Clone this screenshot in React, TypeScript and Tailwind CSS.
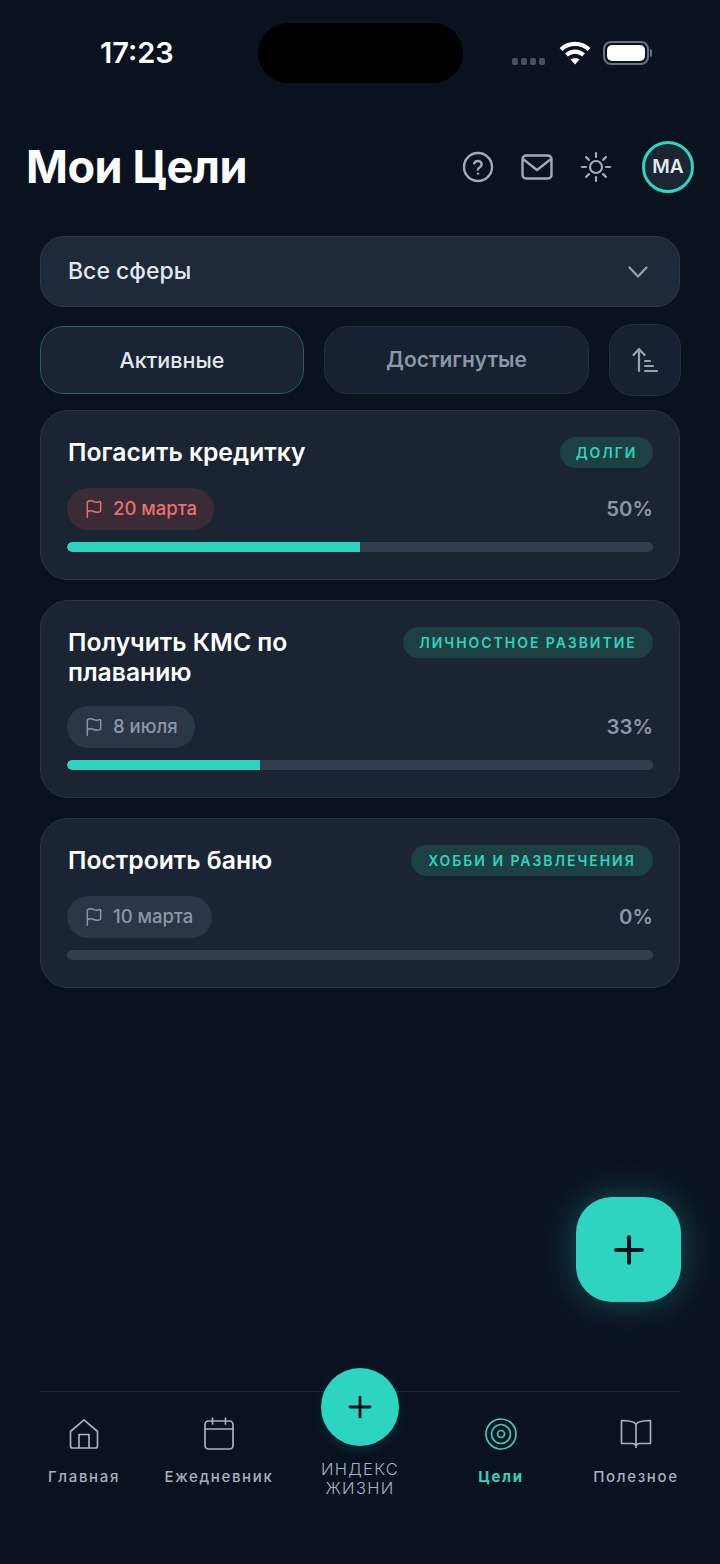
import { Flag, Plus } from "lucide-react";

const goals = [
  { title: "Погасить кредитку", tag: "ДОЛГИ", date: "20 марта", pct: 50, overdue: true, tagW: "w-[93px]", dateW: "w-[147px]", h: "h-[170px]", gap: "mt-[20px]" },
  { title: "Получить КМС по плаванию", tag: "ЛИЧНОСТНОЕ РАЗВИТИЕ", date: "8 июля", pct: 33, overdue: false, tagW: "w-[250px]", dateW: "w-[128px]", h: "h-[198px]", gap: "mt-[19px]" },
  { title: "Построить баню", tag: "ХОББИ И РАЗВЛЕЧЕНИЯ", date: "10 марта", pct: 0, overdue: false, tagW: "w-[242px]", dateW: "w-[145px]", h: "h-[170px]", gap: "mt-[20px]" },
];

function GoalCard({ goal }: { goal: (typeof goals)[number] }) {
  return (
    <div className={`${goal.h} rounded-[28px] border border-[#273742] bg-[#1a2432] px-[26px] pt-[26px]`}>
      <div className="flex items-start justify-between">
        <h2 className="w-[290px] pl-[1px] text-[24.7px] leading-[30px] font-semibold text-white">{goal.title}</h2>
        <span className={`${goal.tagW} flex h-[31px] shrink-0 items-center justify-center rounded-full bg-[#1d4045] text-[14px] font-semibold tracking-[0.14em] text-[#2dd4bf]`}>
          {goal.tag}
        </span>
      </div>
      <div className={`${goal.gap} flex items-center justify-between`}>
        <span
          className={`${goal.dateW} flex h-[42px] items-center gap-[9px] rounded-full pl-[17px] text-[18.5px] font-medium ${
            goal.overdue ? "bg-[#3a2b36] text-[#e8706f]" : "bg-[#2b3648] text-[#8b96a8]"
          }`}
        >
          <Flag size={20} strokeWidth={1.8} />
          {goal.date}
        </span>
        <span className="text-[20.4px] font-semibold text-[#8b96a8]">{goal.pct}%</span>
      </div>
      <div className="mt-[12px] h-[10px] overflow-hidden rounded-full bg-[#323e4f]">
        <div className="h-full rounded-l-full bg-[#2dd4bf]" style={{ width: `${goal.pct}%` }} />
      </div>
    </div>
  );
}

function NavItem({ label, width, active, children }: { label: string; width: string; active?: boolean; children: React.ReactNode }) {
  return (
    <div className={`${width} flex flex-col items-center ${active ? "text-[#2dd4bf]" : "text-[#a7b0bf]"}`}>
      <div className="flex h-[34px] w-[34px] items-center justify-center">{children}</div>
      <span className={`mt-[16px] text-[15px] leading-[20px] tracking-[0.11em] ${active ? "font-bold" : "font-medium"}`}>{label}</span>
    </div>
  );
}

export default function App() {
  return (
    <div className="relative flex h-[1564px] w-[720px] flex-col overflow-hidden bg-[#0a1220] font-['Inter',sans-serif]">
      {/* Status bar */}
      <div className="flex items-start pt-[23px]">
        <span className="mt-[11px] ml-[100px] w-[158px] text-[29px] leading-[38px] font-semibold text-white">17:23</span>
        <div className="h-[60px] w-[205px] rounded-[30px] bg-black" />
        <div className="mt-[17px] ml-[49px] flex items-center">
          <div className="mt-[16px] flex gap-[3px]">
            <i className="h-[7px] w-[6px] rounded-[2px] bg-[#4a5260]" />
            <i className="h-[7px] w-[6px] rounded-[2px] bg-[#4a5260]" />
            <i className="h-[7px] w-[6px] rounded-[2px] bg-[#4a5260]" />
            <i className="h-[7px] w-[6px] rounded-[2px] bg-[#4a5260]" />
          </div>
          <svg className="ml-[14px]" width="32" height="26" viewBox="0 0 32 26" fill="none" stroke="white" strokeWidth="4.2">
            <path d="M2 9.5C10 2 22 2 30 9.5" />
            <path d="M7.5 15C12.5 10.5 19.5 10.5 24.5 15" />
            <path d="M16 24.5L11.5 19.5C14 17.7 18 17.7 20.5 19.5Z" fill="white" stroke="none" />
          </svg>
          <div className="ml-[12px] flex items-center">
            <div className="flex h-[24px] w-[46px] items-center justify-center rounded-[8px] border-2 border-[#6b7280]">
              <div className="h-[16px] w-[38px] rounded-[5px] bg-white" />
            </div>
            <div className="ml-[1px] h-[8px] w-[2px] rounded-r bg-[#6b7280]" />
          </div>
        </div>
      </div>

      {/* Header */}
      <div className="mt-[48px] flex h-[72px] items-center pr-[26px] pl-[26px]">
        <h1 className="flex-1 text-[45px] font-bold tracking-[-0.01em] text-white">Мои Цели</h1>
        <div className="flex items-center text-[#a0aaba]">
          <svg width="32" height="32" viewBox="0 0 32 32" fill="none" stroke="currentColor" strokeWidth="2.4" strokeLinecap="round">
            <circle cx="16" cy="16" r="14" />
            <path d="M12.2 12.4a3.9 3.9 0 0 1 7.5 1.2c0 2.5-3.7 3-3.7 5" />
            <path d="M16 22.6h.02" />
          </svg>
          <svg className="ml-[27px]" width="32" height="26" viewBox="0 0 32 26" fill="none" stroke="currentColor" strokeWidth="2.4" strokeLinejoin="round">
            <rect x="1.5" y="1.5" width="29" height="23" rx="3.5" />
            <path d="M2 5l14 11L30 5" />
          </svg>
          <svg className="ml-[27px]" width="32" height="32" viewBox="0 0 32 32" fill="none" stroke="currentColor" strokeWidth="2.2" strokeLinecap="round">
            <circle cx="16" cy="16" r="6" />
            <path d="M16 2v4M16 26v4M2 16h4M26 16h4M6.1 6.1l2.8 2.8M23.1 23.1l2.8 2.8M6.1 25.9l2.8-2.8M23.1 8.9l2.8-2.8" />
          </svg>
          <div className="ml-[30px] flex h-[52px] w-[52px] items-center justify-center rounded-full border-[3px] border-[#2dd4bf] bg-[#1b2533] text-[19px] font-semibold text-[#e2e8f0]">
            MA
          </div>
        </div>
      </div>

      <main className="mt-[33px] flex flex-col px-[40px]">
        {/* Sphere select */}
        <div className="flex h-[71px] items-center justify-between rounded-[24px] border border-[#2c3848] bg-[#1e293a] pr-[31px] pl-[27px]">
          <span className="text-[23px] font-medium text-[#e2e8f0]">Все сферы</span>
          <svg width="20" height="12" viewBox="0 0 20 12" fill="none" stroke="#94a3b8" strokeWidth="2.2" strokeLinecap="round" strokeLinejoin="round">
            <path d="M1.5 1.5 10 10.5l8.5-9" />
          </svg>
        </div>

        {/* Tabs */}
        <div className="mt-[17px] flex items-center">
          <button className="h-[68px] w-[264px] shrink-0 rounded-[24px] border border-[#27605f] bg-[#1a2433] text-[21.5px] font-medium text-[#e2e8f0]">Активные</button>
          <button className="ml-[20px] h-[68px] w-[265px] shrink-0 rounded-[24px] border border-[#232e3d] bg-[#172131] text-[21px] font-semibold text-[#8b96a8]">Достигнутые</button>
          <button className="ml-[20px] flex h-[72px] w-[72px] shrink-0 items-center justify-center rounded-[24px] border border-[#232e3d] bg-[#172131] text-[#94a3b8]">
            <svg width="26" height="26" viewBox="0 0 26 26" fill="none" stroke="currentColor" strokeWidth="2.2" strokeLinecap="round" strokeLinejoin="round">
              <path d="M7 24V2M1.5 8L7 2l5.5 6" />
              <path d="M13 14h5M13 19h8M13 24h12" />
            </svg>
          </button>
        </div>

        {/* Goals */}
        <div className="mt-[14px] flex flex-col gap-[20px]">
          {goals.map((goal) => (
            <GoalCard key={goal.title} goal={goal} />
          ))}
        </div>
      </main>

      {/* FAB */}
      <button className="absolute top-[1197px] left-[576px] flex h-[105px] w-[105px] items-center justify-center rounded-[36px] bg-[#2dd4bf] text-[#0a1220] shadow-[0_0_34px_rgba(45,212,191,0.35)]">
        <Plus size={44} strokeWidth={2.2} />
      </button>

      {/* Bottom nav */}
      <nav className="mx-[40px] mt-auto mb-[66px] border-t border-[#182231] pt-[25px]">
        <div className="-mx-[23px] flex items-start">
          <NavItem label="Главная" width="w-[134px]">
            <svg width="30" height="32" viewBox="0 0 30 32" fill="none" stroke="currentColor" strokeWidth="1.7" strokeLinejoin="round">
              <path d="M1.5 13.5 15 1.8l13.5 11.7V28a2 2 0 0 1-2 2h-23a2 2 0 0 1-2-2Z" />
              <path d="M10 30V16.5h10V30" />
            </svg>
          </NavItem>
          <NavItem label="Ежедневник" width="w-[136px]">
            <svg width="30" height="34" viewBox="0 0 30 34" fill="none" stroke="currentColor" strokeWidth="1.7" strokeLinecap="round" strokeLinejoin="round">
              <rect x="1" y="4" width="28" height="28" rx="3.5" />
              <path d="M1 12h28M8.5 1v6M21.5 1v6" />
            </svg>
          </NavItem>
          <div className="relative flex w-[146px] flex-col items-center">
            <button className="absolute -top-[49px] flex h-[78px] w-[78px] items-center justify-center rounded-full bg-[#2dd4bf] text-[#0a1220] shadow-[0_4px_10px_rgba(15,60,70,0.6)]">
              <Plus size={34} strokeWidth={2} />
            </button>
            <span className="mt-[43px] w-[100px] text-center text-[16.5px] leading-[19px] font-light tracking-[0.08em] text-[#a7b0bf]">ИНДЕКС ЖИЗНИ</span>
          </div>
          <NavItem label="Цели" width="w-[136px]" active>
            <svg width="32" height="32" viewBox="0 0 32 32" fill="none" stroke="currentColor" strokeWidth="1.7">
              <circle cx="16" cy="16" r="15" />
              <circle cx="16" cy="16" r="9.5" />
              <circle cx="16" cy="16" r="3.5" />
            </svg>
          </NavItem>
          <NavItem label="Полезное" width="w-[134px]">
            <svg width="32" height="30" viewBox="0 0 32 30" fill="none" stroke="currentColor" strokeWidth="1.7" strokeLinejoin="round">
              <path d="M16 5C14 2.8 9 1.5 1.5 1.5V24.5H12C14 24.5 15 25 16 26.5 17 25 18 24.5 20 24.5H30.5V1.5C23 1.5 18 2.8 16 5Z" />
              <path d="M16 5v24" />
            </svg>
          </NavItem>
        </div>
      </nav>
    </div>
  );
}
